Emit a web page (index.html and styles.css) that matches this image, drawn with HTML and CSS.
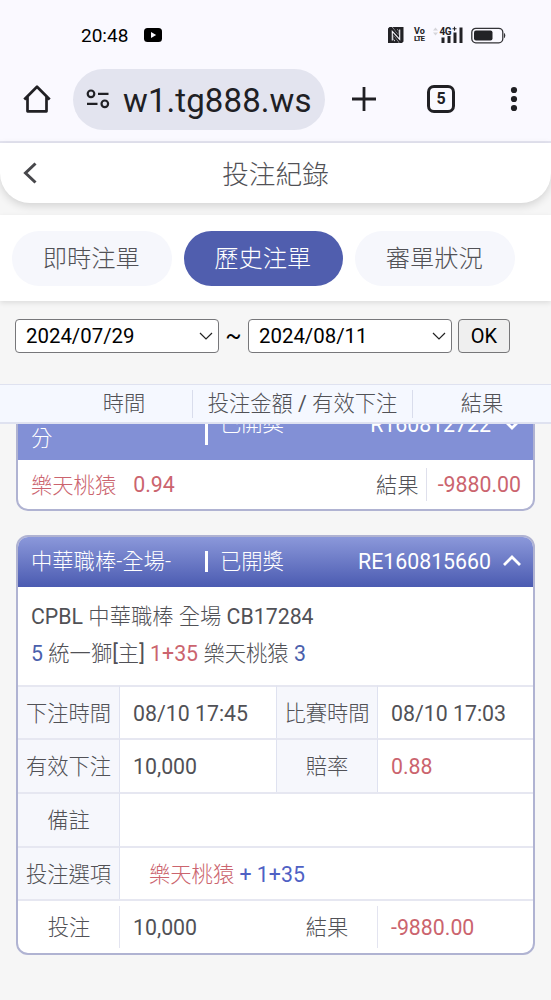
FILE: index.html
```
<!DOCTYPE html>
<html lang="zh-Hant">
<head>
  <meta charset="UTF-8">
  <meta name="viewport" content="width=device-width, initial-scale=1.0">
  <title>投注紀錄</title>
  <link rel="stylesheet" href="styles.css">
</head>
<body>
  <div class="phone-top">
    <div class="status">
      <span class="clock">20:48</span>
      <svg class="yt" width="18" height="14" viewBox="0 0 18 14"><rect width="18" height="14" rx="3.5" fill="#000"/><path d="M7 4l5.2 3L7 10z" fill="#faf9ff"/></svg>
      <div class="status-right">
        <svg width="16" height="16" viewBox="0 0 16 16"><path d="M1.500 0H4l6.500 8V3.500L9 2V0h6.500v14.500L14 16h-2.500L5.500 8v5L7 14.500V16H0V1.500z" fill="#222226"/><path d="M4.500 0H9v2.500L10.500 4v4zM11 16H7v-2.500L5.500 12V8z" fill="#222226"/><path d="M4.300 13.500V4.300l7.400 8V2.500" fill="none" stroke="#faf9ff" stroke-width="1.100"/></svg>
        <span class="volte"><b>Vo</b><b>LTE</b></span>
        <svg class="signal" width="32" height="18" viewBox="0 0 32 18"><path d="M0 4.500l2.500-3 2.500 3zM0 6.500l2.500 3 2.500-3z" fill="#d5d5da"/><g fill="#222226"><rect x="8.500" y="11.500" width="3" height="5.500"/><rect x="14.500" y="10" width="3" height="7"/><rect x="20.500" y="6.500" width="3" height="10.500"/><rect x="26.500" y="1.500" width="3" height="15.500"/></g><text x="6.500" y="9" class="signal-text">4G</text><path d="M19.500 2.800h4M21.500.8v4" stroke="#222226" stroke-width="1.100"/></svg>
        <svg width="35" height="17" viewBox="0 0 35 17"><rect x=".8" y="1.300" width="31" height="14.500" rx="4" fill="none" stroke="#333337" stroke-width="1.300"/><rect x="3" y="3.500" width="18.500" height="10" rx="2" fill="#222226"/><path d="M33 6v5.200q1.300-.4 1.300-2.600T33 6z" fill="#333337"/></svg>
      </div>
    </div>
    <div class="browser">
      <svg class="home" width="28" height="30" viewBox="0 0 28 30"><path d="M1.300 15.500L14 2.800l12.700 12.700M4.500 13v14.300h19V13" fill="none" stroke="#202024" stroke-width="2.700" stroke-linejoin="round"/></svg>
      <div class="url">
        <svg width="24" height="20" viewBox="0 0 24 20" fill="none" stroke="#202024" stroke-width="2.200"><circle cx="5" cy="4.800" r="3.300"/><path d="M12 4.800h10.500M1 14.800h10.500"/><circle cx="18.800" cy="14.800" r="3.300"/></svg>
        <span>w1.tg888.ws</span>
      </div>
      <svg class="plus" width="26" height="26" viewBox="0 0 26 26"><path d="M13 1v24M1 13h24" stroke="#202024" stroke-width="2.800"/></svg>
      <span class="tabs-count">5</span>
      <svg class="dots" width="8" height="26" viewBox="0 0 8 26" fill="#202024"><circle cx="4" cy="4" r="3.100"/><circle cx="4" cy="13" r="3.100"/><circle cx="4" cy="22" r="3.100"/></svg>
    </div>
  </div>

  <header class="title-bar">
    <svg class="back" width="16" height="24" viewBox="0 0 16 24"><path d="M13.500 2.500L3.500 12l10 9.500" fill="none" stroke="#47474b" stroke-width="3"/></svg>
    <h1>投注紀錄</h1>
  </header>

  <nav class="tabs">
    <a class="tab">即時注單</a>
    <a class="tab active">歷史注單</a>
    <a class="tab">審單狀況</a>
  </nav>

  <div class="filter">
    <div class="date">2024/07/29<svg width="14" height="10" viewBox="0 0 14 10"><path d="M1 2l6 6 6-6" fill="none" stroke="#222" stroke-width="1.200"/></svg></div>
    <span class="tilde">~</span>
    <div class="date">2024/08/11<svg width="14" height="10" viewBox="0 0 14 10"><path d="M1 2l6 6 6-6" fill="none" stroke="#222" stroke-width="1.200"/></svg></div>
    <button class="ok">OK</button>
  </div>

  <div class="list-head">
    <span>時間</span>
    <span>投注金額 <i>/</i> 有效下注</span>
    <span>結果</span>
  </div>

  <main class="list">
    <section class="card">
      <div class="card-head closed">
        <span class="game">分</span>
        <span class="state">已開獎</span>
        <span class="number">R160812722</span>
        <svg width="20" height="14" viewBox="0 0 20 14"><path d="M2 3l8 8 8-8" fill="none" stroke="#fff" stroke-width="2.800"/></svg>
      </div>
      <div class="summary">
        <span class="red zh">樂天桃猿</span>
        <span class="red odds">0.94</span>
        <span class="zh result">結果</span>
        <span class="red amount">-9880.00</span>
      </div>
    </section>

    <section class="card">
      <div class="card-head">
        <span class="game">中華職棒-全場-</span>
        <span class="state">已開獎</span>
        <span class="number">RE160815660</span>
        <svg width="20" height="14" viewBox="0 0 20 14"><path d="M2 11l8-8 8 8" fill="none" stroke="#fff" stroke-width="2.800"/></svg>
      </div>
      <div class="info">
        <p>CPBL <span class="zh">中華職棒 全場</span> CB17284</p>
        <p><span class="blue">5</span> <span class="zh">統一獅</span>[<span class="zh">主</span>] <span class="red">1+35</span> <span class="zh">樂天桃猿</span> <span class="blue">3</span></p>
      </div>
      <div class="detail">
        <div class="label">下注時間</div>
        <div class="value">08/10 17:45</div>
        <div class="label second">比賽時間</div>
        <div class="value">08/10 17:03</div>
        <div class="label">有效下注</div>
        <div class="value">10,000</div>
        <div class="label second">賠率</div>
        <div class="value red">0.88</div>
        <div class="label">備註</div>
        <div class="value wide"></div>
        <div class="label">投注選項</div>
        <div class="value wide option"><span class="red zh">樂天桃猿</span> <span class="royal">+ 1+35</span></div>
        <div class="label total">投注</div>
        <div class="value">10,000</div>
        <div class="label total">結果</div>
        <div class="value red">-9880.00</div>
      </div>
    </section>
  </main>
</body>
</html>
```
FILE: styles.css
```
* {
  box-sizing: border-box;
}
body {
  margin: 0;
  height: 1000px;
  overflow: hidden;
  display: flex;
  flex-direction: column;
  background: #f6f6f6;
  color: #515156;
  font-family: Roboto, "Noto Sans CJK TC", sans-serif;
  font-size: 21.3px;
}
svg {
  display: block;
  flex: none;
}
.zh {
  font-weight: 300;
}
.red {
  color: #cb646e;
}
.blue {
  color: #4a60ac;
}
.royal {
  color: #4f61c4;
}

/* status bar + browser */
.phone-top {
  height: 143px;
  flex: none;
  background: #faf9ff;
  border-bottom: 2px solid #e4e4f0;
}
.status {
  display: flex;
  align-items: center;
  height: 70px;
  padding: 0 45px 0 81px;
  color: #000;
}
.clock {
  width: 63px;
  font-size: 19px;
}
.status-right {
  display: flex;
  align-items: center;
  margin-left: auto;
}
.volte {
  display: flex;
  flex-direction: column;
  width: 13px;
  margin: 0 6px 0 10px;
  font-family: Roboto, sans-serif;
  font-size: 9px;
  line-height: 8px;
  color: #222226;
}
.volte b:last-child {
  font-size: 8px;
  letter-spacing: -0.9px;
}
.signal {
  margin-right: 6px;
}
.signal-text {
  font: bold 10px Roboto, sans-serif;
  letter-spacing: -0.6px;
  fill: #222226;
  stroke: #faf9ff;
  stroke-width: 1px;
  paint-order: stroke;
}
.browser {
  display: flex;
  align-items: center;
  height: 58px;
  padding-left: 23px;
  color: #202024;
}
.url {
  display: flex;
  align-items: center;
  width: 252px;
  height: 61px;
  margin-left: 22px;
  padding-left: 13px;
  border-radius: 31px;
  background: #e3e4ef;
}
.url span {
  margin-left: 13px;
  padding-top: 2px;
  font-size: 33px;
  letter-spacing: 0.1px;
}
.plus {
  margin-left: 26px;
}
.tabs-count {
  width: 28px;
  height: 28px;
  margin-left: 50px;
  border: 3px solid #202024;
  border-radius: 7px;
  font-size: 16px;
  font-weight: 700;
  line-height: 22px;
  text-align: center;
}
.dots {
  margin-left: 55px;
}

/* page title */
.title-bar {
  display: flex;
  align-items: center;
  flex: none;
  height: 60px;
  padding: 0 22px;
  border-radius: 0 0 30px 30px;
  background: #fff;
  box-shadow: 0 3px 9px rgba(0, 0, 0, 0.14);
}
.title-bar h1 {
  flex: 1;
  margin: 0 16px 0 0;
  padding-top: 4px;
  font-size: 26.7px;
  font-weight: 300;
  line-height: 60px;
  text-align: center;
}
.tabs {
  display: flex;
  flex: none;
  gap: 12px;
  height: 86px;
  margin-top: 12px;
  padding: 16px 12px 0;
  background: #fff;
  box-shadow: 0 2px 5px rgba(0, 0, 0, 0.1);
}
.tab {
  width: 159.5px;
  height: 55px;
  padding-right: 1px;
  border-radius: 28px;
  background: #f6f7fc;
  font-size: 24.3px;
  font-weight: 300;
  line-height: 56px;
  text-align: center;
}
.tab.active {
  background: #505eae;
  color: #fff;
}

/* date range */
.filter {
  display: flex;
  flex: none;
  height: 83px;
  padding: 18px 15px 0;
  color: #000;
}
.date {
  display: flex;
  align-items: center;
  justify-content: space-between;
  width: 204px;
  height: 34px;
  padding: 0 5px 0 10px;
  border: 1px solid #77777a;
  border-radius: 4px;
  background: #fff;
  font-size: 20.4px;
}
.tilde {
  width: 29px;
  font-size: 24px;
  line-height: 34px;
  text-align: center;
}
.ok {
  width: 52px;
  height: 34px;
  margin-left: 6px;
  padding: 0;
  border: 1px solid #777779;
  border-radius: 4px;
  background: #efefef;
  color: #000;
  font-family: inherit;
  font-size: 20px;
}

.list-head {
  display: grid;
  grid-template-columns: 193px 220px 1fr;
  align-items: center;
  flex: none;
  height: 40px;
  border-top: 1px solid #dfe2f0;
  border-bottom: 2px solid #dfe2f0;
  background: #f5f8ff;
  font-weight: 300;
  text-align: center;
}
.list-head span {
  height: 28px;
  border-right: 1px solid #d9ddec;
  line-height: 28px;
}
.list-head span:first-child {
  padding-left: 56px;
}
.list-head span:last-child {
  border: none;
}
.list-head i {
  font-style: normal;
  font-weight: 400;
}

/* bet cards */
.list {
  flex: 1;
  overflow: hidden;
  padding: 0 16px;
}
.card {
  margin-bottom: 24px;
  overflow: hidden;
  border: 2px solid #b0b3d2;
  border-radius: 12px;
  background: #fff;
}
/* list is scrolled, the first card sits partly under the head */
.card:first-child {
  margin-top: -38px;
}
.card-head {
  display: flex;
  align-items: center;
  height: 50px;
  padding: 0 11px 2px 13px;
  background: linear-gradient(#8b98da, #4b5bb1);
  color: #fff;
}
.card-head.closed {
  height: 72px;
  padding-bottom: 0;
  background: #8290d6;
}
.game {
  width: 174px;
  font-weight: 300;
  line-height: 27px;
}
.closed .game {
  padding-top: 28px;
}
.state {
  padding-left: 12px;
  border-left: 3px solid #fff;
  font-weight: 300;
  line-height: 21px;
}
.closed .state {
  line-height: 42px;
}
.number {
  margin: 0 11px 0 auto;
}
.summary {
  display: flex;
  align-items: center;
  height: 49px;
  padding: 0 12px 1px 13px;
}
.summary .zh {
  margin-top: -2px;
}
.odds {
  margin-left: 17px;
}
.summary .result {
  margin-left: auto;
}
.amount {
  margin-left: 7px;
  padding-left: 11px;
  border-left: 1px solid #dfe0ec;
  line-height: 33px;
}
.info {
  height: 97.500px;
  padding: 11px 13px 0;
}
.info p {
  margin: 0;
  line-height: 37px;
}
.detail {
  display: grid;
  grid-template-columns: 102px 156px 102px 1fr;
  grid-auto-rows: 53.7px;
}
.detail > div {
  border-top: 2px solid #e6e7f1;
  line-height: 53px;
}
.label {
  border-right: 1px solid #dfe2f0;
  background: #f6f7fc;
  font-weight: 300;
  text-align: center;
}
.label.second {
  border-left: 1px solid #dfe2f0;
}
.value {
  padding-left: 13px;
}
.wide {
  grid-column: span 3;
}
.option {
  padding-left: 29px;
}
.label.total {
  border-right: none;
  background: linear-gradient(#e3e4f0, #e3e4f0) right 5px / 1px 42px no-repeat;
}
```
